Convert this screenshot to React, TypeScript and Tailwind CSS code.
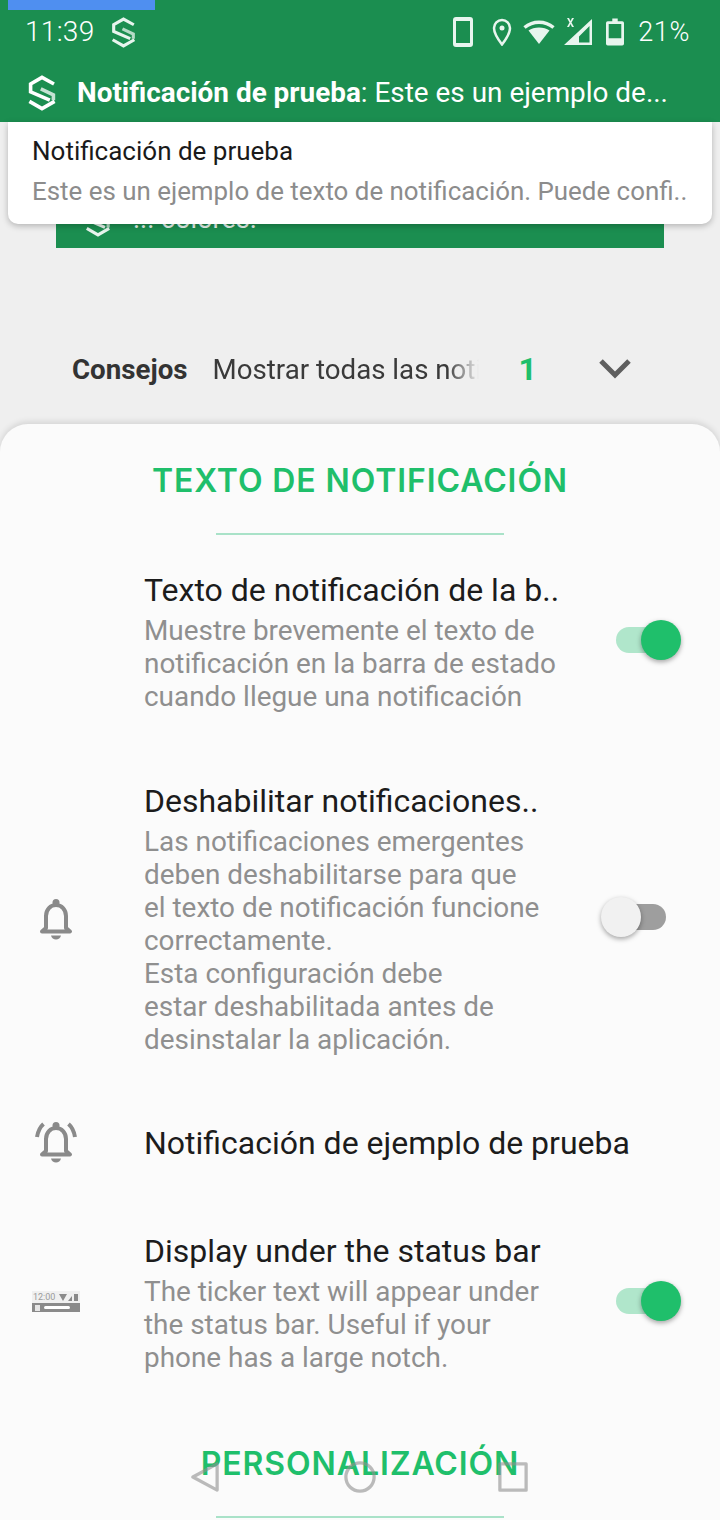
const Logo = ({ className }: { className: string }) => (
  <svg viewBox="0 0 24 30" className={className} fill="none" stroke="currentColor" strokeWidth="3">
    <path d="M22 7.500 12 2 2.500 7.500V14l16 7" />
    <path d="M11 11.500l10.500 5V21" opacity="0.75" />
    <path d="M1.500 22 12 28l10.500-6" />
  </svg>
);

const Bell = ({ ringing }: { ringing?: boolean }) => (
  <svg viewBox="0 0 48 44" className="w-[48px] h-[44px]" fill="none" stroke="#8a8a8a" strokeWidth="4">
    <circle cx="24" cy="4.500" r="3.500" fill="#8a8a8a" stroke="none" />
    <path d="M10 33.500 14 30V18c0-6.500 4.500-11 10-11s10 4.500 10 11v12l4 3.500z" strokeLinejoin="round" />
    <path d="M19 37.500h10c-.6 2.800-2.600 4-5 4s-4.400-1.200-5-4z" fill="#8a8a8a" stroke="none" />
    {ringing && (
      <>
        <path d="M5 16C6 10 8 6 11.500 3" />
        <path d="M43 16C42 10 40 6 36.500 3" />
      </>
    )}
  </svg>
);

const Toggle = ({ on }: { on?: boolean }) => (
  <div className={on ? 'relative w-[50px] h-[26px] rounded-full bg-[#b0e6cb]' : 'relative w-[50px] h-[26px] rounded-full bg-[#9e9e9e]'}>
    <div
      className={
        on
          ? 'absolute right-[-15px] top-[-7px] w-[40px] h-[40px] rounded-full bg-[#1fbf6b] shadow-[0_2px_5px_rgba(0,0,0,0.35)]'
          : 'absolute left-[-15px] top-[-7px] w-[40px] h-[40px] rounded-full bg-[#f1f1f1] shadow-[0_2px_5px_rgba(0,0,0,0.35)]'
      }
    />
  </div>
);

const SectionTitle = ({ children }: { children: string }) => (
  <div className="flex flex-col items-center">
    <div className="h-[36px] leading-[36px] pt-[1px] text-[32px] font-semibold tracking-[0.9px] text-[#1fbf6b] font-['Inter',sans-serif] whitespace-nowrap">
      {children}
    </div>
    <div className="mt-[35px] w-[288px] h-[2px] bg-[#a9e2c8]" />
  </div>
);

const SettingRow = ({
  title,
  lines,
  icon,
  toggle,
  className,
}: {
  title: string;
  lines?: string[];
  icon?: React.ReactNode;
  toggle?: React.ReactNode;
  className: string;
}) => (
  <div className={`flex items-center ${className}`}>
    <div className="w-[112px] shrink-0 flex justify-center">{icon}</div>
    <div className="ml-[32px] flex-1">
      <div className="text-[32px] leading-[36px] text-[#1c1c1c]">{title}</div>
      {lines && (
        <div className="mt-[6px] text-[27.9px] leading-[33px] text-[#8f8f8f]">
          {lines.map((l) => (
            <div key={l}>{l}</div>
          ))}
        </div>
      )}
    </div>
    {toggle && <div className="w-[104px] shrink-0 -mt-[5px]">{toggle}</div>}
  </div>
);

export default function App() {
  return (
    <div className="relative w-[720px] h-[1520px] overflow-hidden bg-[#efefef] font-['Roboto',sans-serif]">
      <header className="relative h-[122px] bg-[#1b8e50] text-[#e8f5ee]">
        <div className="absolute left-[8px] top-0 w-[147px] h-[10px] bg-[#4f8ff0]" />
        <div className="flex items-center h-[64px] pl-[25px] pr-[30px]">
          <span className="text-[28px] font-light tracking-[0.3px] text-white">11:39</span>
          <Logo className="ml-[16px] w-[25px] h-[31px]" />
          <div className="ml-auto flex items-center">
            <svg viewBox="0 0 20 30" className="w-[20px] h-[30px]" fill="#e8f5ee">
              <path d="M3 0h14a3 3 0 0 1 3 3v24a3 3 0 0 1-3 3H3a3 3 0 0 1-3-3V3a3 3 0 0 1 3-3zm0 4v22h14V4z" fillRule="evenodd" />
            </svg>
            <svg viewBox="0 0 20 28" className="ml-[19px] w-[20px] h-[28px]" fill="none" stroke="#e8f5ee" strokeWidth="2.500">
              <path d="M10 26.500C5 20 2 15.500 2 10a8 8 0 0 1 16 0c0 5.500-3 10-8 16.500z" />
              <circle cx="10" cy="10" r="2.500" fill="#e8f5ee" stroke="none" />
            </svg>
            <svg viewBox="0 0 32 24" className="ml-[11px] w-[32px] h-[24px]" fill="#e8f5ee">
              <path d="M16 24 5.500 10.500C11 6.500 21 6.500 26.500 10.500z" />
              <path d="M1.500 7.500C10 .5 22 .5 30.500 7.500" fill="none" stroke="#e8f5ee" strokeWidth="3.500" />
            </svg>
            <svg viewBox="0 0 28 30" className="ml-[9px] w-[28px] h-[30px]" fill="#e8f5ee">
              <path d="M28 2v26H0zM25.500 9 15 19.500V25.500h10.500z" fillRule="evenodd" />
              <path d="M3 1h2l1.500 3L8 1h2L7.500 5.500 10 10H8L6.500 7 5 10H3l2.500-4.500z" />
            </svg>
            <svg viewBox="0 0 20 30" className="ml-[14px] w-[18px] h-[30px]" fill="#e8f5ee">
              <path d="M7 0h6v3h5a2 2 0 0 1 2 2v23a2 2 0 0 1-2 2H2a2 2 0 0 1-2-2V5a2 2 0 0 1 2-2h5zM3 6v16h14V6z" fillRule="evenodd" />
            </svg>
            <span className="ml-[14px] text-[27px] font-light tracking-[0.6px] text-white">21%</span>
          </div>
        </div>
        <div className="flex items-center h-[58px] pl-[27px]">
          <Logo className="w-[30px] h-[36px] text-white" />
          <div className="ml-[20px] text-[27.9px] text-white whitespace-nowrap">
            <span className="font-bold">Notificación de prueba</span>: Este es un ejemplo de...
          </div>
        </div>
      </header>

      <div className="relative z-10 mx-[8px] h-[102px] bg-white rounded-b-[10px] shadow-[0_2px_6px_rgba(0,0,0,0.25)] pl-[24px] pt-[11px]">
        <div className="text-[26px] leading-[36px] text-[#1a1a1a]">Notificación de prueba</div>
        <div className="mt-[4px] text-[25.9px] leading-[36px] text-[#8c8c8c] whitespace-nowrap">
          Este es un ejemplo de texto de notificación. Puede confi..
        </div>
      </div>

      <div className="-mt-[24px] mx-[56px] h-[48px] bg-[#1b8e50] flex items-center pl-[28px] text-[#e8f5ee]">
        <Logo className="w-[28px] h-[32px] -mt-[6px]" />
        <span className="ml-[21px] text-[27px] -mt-[10px]">... colores.</span>
      </div>

      <div className="flex items-center h-[42px] mt-[100px] pl-[72px]">
        <span className="pt-[1px] text-[27.7px] font-bold text-[#333333]">Consejos</span>
        <span className="pt-[1px] ml-[25px] w-[266px] text-[27.7px] text-[#3a3a3a] whitespace-nowrap overflow-hidden [mask-image:linear-gradient(to_right,black_88%,transparent)]">
          Mostrar todas las notificaciones
        </span>
        <span className="ml-[40px] text-[32px] font-bold text-[#1fbf6b]">1</span>
        <svg viewBox="0 0 32 22" className="ml-[62px] w-[32px] h-[22px]" fill="none" stroke="#5f5f5f" strokeWidth="5">
          <path d="M2 3l14 14L30 3" />
        </svg>
      </div>

      <main className="mt-[34px] h-[1096px] bg-[#fbfbfb] rounded-t-[28px] shadow-[0_-2px_6px_rgba(0,0,0,0.12)] pt-[38px]">
        <SectionTitle>TEXTO DE NOTIFICACIÓN</SectionTitle>
        <SettingRow
          className="mt-[37px]"
          title="Texto de notificación de la b.."
          lines={[
            'Muestre brevemente el texto de',
            'notificación en la barra de estado',
            'cuando llegue una notificación',
          ]}
          toggle={<Toggle on />}
        />
        <SettingRow
          className="mt-[70px]"
          title="Deshabilitar notificaciones.."
          lines={[
            'Las notificaciones emergentes',
            'deben deshabilitarse para que',
            'el texto de notificación funcione',
            'correctamente.',
            'Esta configuración debe',
            'estar deshabilitada antes de',
            'desinstalar la aplicación.',
          ]}
          icon={<Bell />}
          toggle={<Toggle />}
        />
        <SettingRow
          className="mt-[65px]"
          title="Notificación de ejemplo de prueba"
          icon={<Bell ringing />}
        />
        <SettingRow
          className="mt-[68px]"
          title="Display under the status bar"
          lines={[
            'The ticker text will appear under',
            'the status bar. Useful if your',
            'phone has a large notch.',
          ]}
          icon={
            <div className="w-[48px] -mt-[4px]">
              <div className="h-[12px] bg-[#f0f0f0] flex items-center justify-between px-[1px] text-[9px] leading-[12px] text-[#9a9a9a]">
                <span>12:00</span>
                <svg viewBox="0 0 20 9" className="w-[20px] h-[9px]" fill="#8a8a8a">
                  <path d="M0 1h8L4 8zM9 8l4-5v5zM15 1h4v7h-4z" />
                </svg>
              </div>
              <div className="h-[9px] bg-[#8a8a8a] flex items-center pl-[3px]">
                <div className="w-[5px] h-[6px] bg-[#e6e6e6]" />
                <div className="ml-[4px] w-[26px] h-[3px] rounded-full bg-white" />
              </div>
            </div>
          }
          toggle={<Toggle on />}
        />
        <div className="mt-[71px]">
          <SectionTitle>PERSONALIZACIÓN</SectionTitle>
        </div>
      </main>

      {/* navigation keys over the sheet */}
      <div className="absolute left-[191px] top-[1461px] flex items-center">
        <svg viewBox="0 0 30 32" className="w-[28px] h-[30px]" fill="none" stroke="#8f8f8f" strokeOpacity="0.6" strokeWidth="3.500" strokeLinejoin="round">
          <path d="M28 2v28L2 16z" />
        </svg>
        <svg viewBox="0 0 34 34" className="ml-[125px] w-[32px] h-[32px]" fill="none" stroke="#8f8f8f" strokeOpacity="0.6" strokeWidth="3.500">
          <circle cx="17" cy="17" r="15" />
        </svg>
        <svg viewBox="0 0 32 32" className="ml-[122px] w-[30px] h-[30px]" fill="none" stroke="#8f8f8f" strokeOpacity="0.6" strokeWidth="3.500" strokeLinejoin="round">
          <path d="M2 2h28v28H2z" />
        </svg>
      </div>
    </div>
  );
}
